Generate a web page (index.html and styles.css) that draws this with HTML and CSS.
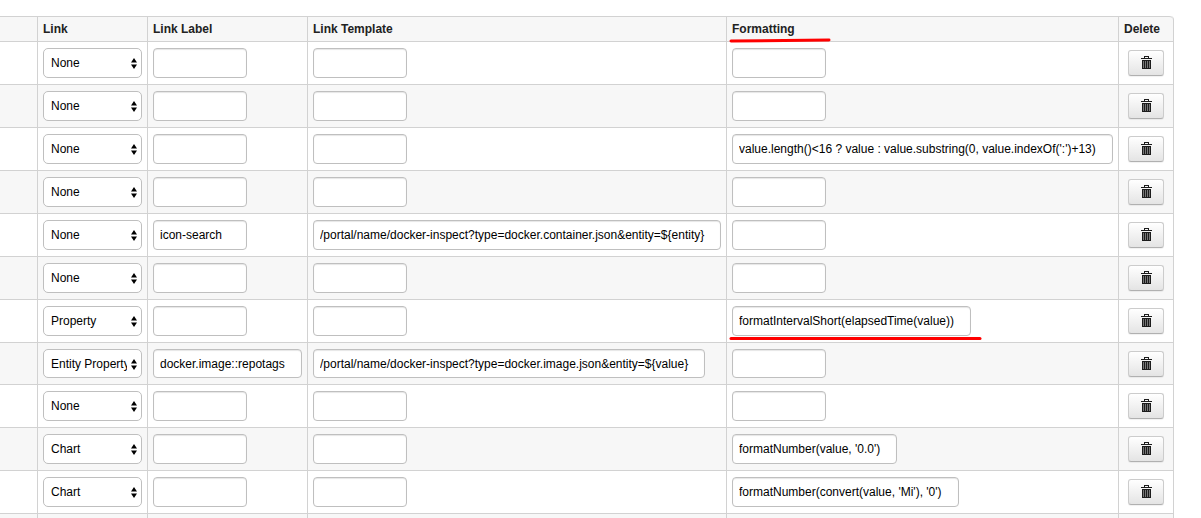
FILE: index.html
```html
<!DOCTYPE html>
<html lang="en">
<head>
<meta charset="utf-8">
<title>Columns</title>
<link rel="stylesheet" href="styles.css">
</head>
<body>
<svg class="sprite" aria-hidden="true">
  <symbol id="trash" viewBox="0 0 11 14">
    <path d="M3 2V0h5v2h3v1H0V2zM4 1v1h3V1z" fill="#1c1c1c" fill-rule="evenodd"/>
    <path d="M1 4h9v9H1z" fill="#1c1c1c"/>
    <path d="M2 5h1v7H2zM4 5h1v7H4zM6 5h1v7H6zM8 5h1v7H8z" fill="#777"/>
  </symbol>
  <symbol id="arrows" viewBox="0 0 6 11">
    <path d="M3 0l3 4.6H0zM0 6.4h6L3 11z" fill="#000"/>
  </symbol>
</svg>
<main class="page">
<table class="grid">
  <colgroup><col><col class="c-link"><col class="c-label"><col class="c-template"><col class="c-format"><col class="c-delete"></colgroup>
  <thead>
    <tr>
      <th></th><th>Link</th><th>Link Label</th><th>Link Template</th>
      <th class="marked">Formatting<svg class="mark mark-head" viewBox="0 0 102 5" aria-hidden="true"><path d="M2 3L100 2" stroke="#f00" stroke-width="3" stroke-linecap="round"/></svg></th>
      <th>Delete</th>
    </tr>
  </thead>
  <tbody id="rows"></tbody>
</table>
</main>
<script src="rows.js"></script>
</body>
</html>
```

FILE: styles.css
```css
* { box-sizing: border-box; }

body {
  margin: 0;
  background: #fff;
  color: #222;
  font: 12px/18px "Liberation Sans", Arial, sans-serif;
}

.sprite { position: absolute; width: 0; height: 0; }

.page { padding: 16px 27px 0 0; }

.grid {
  width: 100%;
  table-layout: fixed;
  border-collapse: separate;
  border-spacing: 0;
  border: 1px solid #d2d2d2;
  border-width: 0 1px 0 0;
  border-radius: 0 4px 0 0;
}

.c-link { width: 110px; }
.c-label { width: 160px; }
.c-template { width: 419px; }
.c-format { width: 392px; }
.c-delete { width: 55px; }

th, td {
  border-top: 1px solid #d2d2d2;
  border-left: 1px solid #d2d2d2;
  text-align: left;
  vertical-align: middle;
}
th:first-child, td:first-child { border-left: 0; }
th:last-child { border-top-right-radius: 4px; }

th { padding: 3px 5px; background: #f7f7f7; font-weight: bold; white-space: nowrap; }
td { padding: 6px 5px; }
td:last-child { text-align: center; }
tbody tr:nth-child(even) td { background: #f7f7f7; }
tbody .next td { padding: 2px; }

.text, .select {
  display: block;
  height: 30px;
  margin: 0;
  border: 1px solid #bfbfbf;
  border-radius: 4px;
  background: #fff;
  color: #000;
  font: inherit;
}
.compact .text, .compact .select { height: 29px; }

.text {
  width: 94px;
  max-width: 100%;
  padding: 0 6px;
  box-shadow: inset 0 1px 1px rgba(0, 0, 0, 0.1);
}
.w-142 { width: 149px; }
.w-160 { width: 165px; }
.w-220 { width: 227px; }
.w-240 { width: 239px; }
.w-390 { width: 392px; }
.w-full { width: 100%; }

.picker { position: relative; }
.select {
  width: 100%;
  padding: 0 14px 0 7px;
  border-radius: 5px;
  appearance: none;
}
.arrows {
  position: absolute;
  top: 10px;
  right: 5px;
  width: 6px;
  height: 11px;
  pointer-events: none;
}

.button {
  display: flex;
  align-items: center;
  justify-content: center;
  width: 36px;
  height: 26px;
  margin: 0 auto;
  padding: 0;
  border: 1px solid #ccc;
  border-bottom-color: #b0b0b0;
  border-radius: 3px;
  background: linear-gradient(#fff, #e4e4e4);
  box-shadow: 0 1px 1px rgba(0, 0, 0, 0.06);
}
.button svg { width: 11px; height: 14px; }

.marked { position: relative; }
.mark { position: absolute; left: 2px; height: 5px; overflow: visible; }
.mark-head { width: 102px; bottom: -2px; }
.mark-row { width: 253px; bottom: 1px; }
```

FILE: rows.js
```js
const rows = [
  ["None"],
  ["None"],
  ["None", "", "", "value.length()<16 ? value : value.substring(0, value.indexOf(':')+13)", "", "", "w-full"],
  ["None"],
  ["None", "icon-search", "/portal/name/docker-inspect?type=docker.container.json&entity=${entity}", "", "", "w-full", ""],
  ["None"],
  ["Property", "", "", "formatIntervalShort(elapsedTime(value))", "", "", "w-240"],
  ["Entity Property", "docker.image::repotags", "/portal/name/docker-inspect?type=docker.image.json&entity=${value}", "", "w-142", "w-390", ""],
  ["None"],
  ["Chart", "", "", "formatNumber(value, '0.0')", "", "", "w-160"],
  ["Chart", "", "", "formatNumber(convert(value, 'Mi'), '0')", "", "", "w-220"]
];
const links = ["None", "Property", "Entity Property", "Chart"];
const names = ["Link Label", "Link Template", "Formatting"];
const body = document.getElementById("rows");

rows.forEach((row, index) => {
  const tr = body.insertRow();
  if (row[0] === "Entity Property") tr.className = "compact";
  tr.insertCell();

  const link = tr.insertCell();
  link.innerHTML = '<div class="picker"><select class="select"></select><svg class="arrows" aria-hidden="true"><use href="#arrows"/></svg></div>';
  const select = link.querySelector("select");
  select.setAttribute("aria-label", "Link, row " + (index + 1));
  links.forEach(name => select.add(new Option(name, name, name === row[0], name === row[0])));

  names.forEach((name, i) => {
    const cell = tr.insertCell();
    const input = document.createElement("input");
    input.type = "text";
    input.className = ("text " + (row[4 + i] || "")).trim();
    input.value = row[1 + i] || "";
    input.setAttribute("aria-label", name + ", row " + (index + 1));
    cell.append(input);
    if (row[0] === "Property" && name === "Formatting") {
      cell.className = "marked";
      cell.insertAdjacentHTML("beforeend", '<svg class="mark mark-row" viewBox="0 0 253 5" aria-hidden="true"><path d="M2 2.5H251" stroke="#f00" stroke-width="3" stroke-linecap="round"/></svg>');
    }
  });

  tr.insertCell().innerHTML = '<button class="button" type="button" aria-label="Delete row ' + (index + 1) + '"><svg aria-hidden="true"><use href="#trash"/></svg></button>';
});

const next = body.insertRow();
next.className = "next";
for (let i = 0; i < 6; i++) next.insertCell();
```
